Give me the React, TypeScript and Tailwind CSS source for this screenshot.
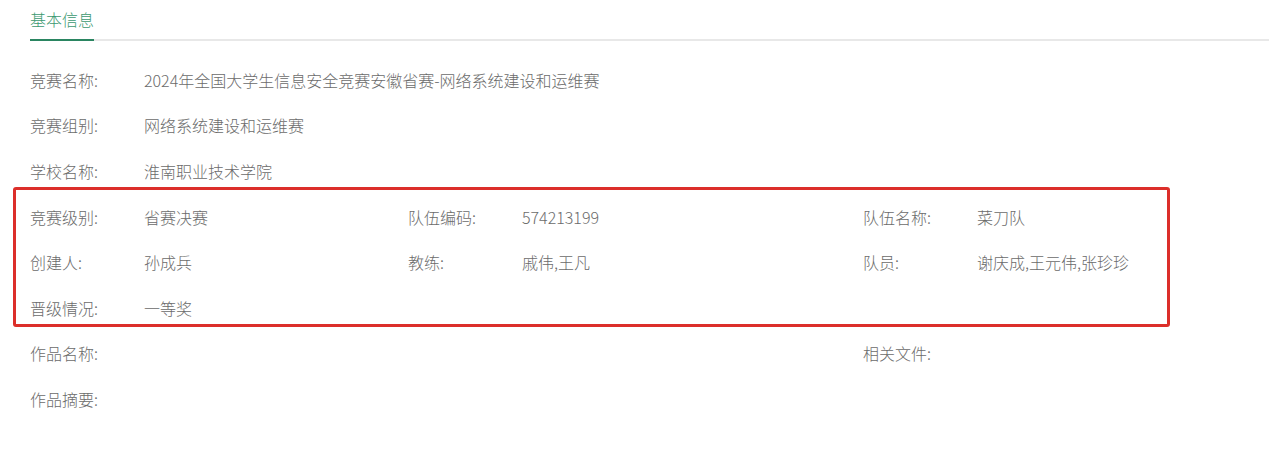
import React from "react";

const font = { fontFamily: '"Noto Sans CJK SC", "Noto Sans", sans-serif' };

type Cell = { label: string; value?: string };

function Row({ cells }: { cells: (Cell | null)[] }) {
  const widths = ["w-[378px] shrink-0", "w-[455px] shrink-0", "flex-1"];
  return (
    <div className="flex h-[45.6px] items-center">
      {cells.map((c, i) => (
        <div key={i} className={`flex whitespace-nowrap ${widths[i]}`}>
          {c && (
            <>
              <span className="w-[114px] shrink-0 text-[#6b6b6b]">{c.label}</span>
              <span className="text-[#6b6b6b]">{c.value}</span>
            </>
          )}
        </div>
      ))}
    </div>
  );
}

export default function App() {
  return (
    <div className="min-h-[475px] bg-white text-[16px] font-light leading-[22px]" style={font}>
      <div className="pl-[30px]">
        <div className="flex border-b-2 border-[#e8e8e8]">
          <div className="-mb-[2px] border-b-2 border-[#2a8561] pt-[8px] pb-[9px] text-[#3b9870]">
            基本信息
          </div>
        </div>
      </div>
      <div className="relative px-[30px] pt-[16px]">
        <Row cells={[{ label: "竞赛名称:", value: "2024年全国大学生信息安全竞赛安徽省赛-网络系统建设和运维赛" }]} />
        <Row cells={[{ label: "竞赛组别:", value: "网络系统建设和运维赛" }]} />
        <Row cells={[{ label: "学校名称:", value: "淮南职业技术学院" }]} />
        <Row
          cells={[
            { label: "竞赛级别:", value: "省赛决赛" },
            { label: "队伍编码:", value: "574213199" },
            { label: "队伍名称:", value: "菜刀队" },
          ]}
        />
        <Row
          cells={[
            { label: "创建人:", value: "孙成兵" },
            { label: "教练:", value: "戚伟,王凡" },
            { label: "队员:", value: "谢庆成,王元伟,张珍珍" },
          ]}
        />
        <Row cells={[{ label: "晋级情况:", value: "一等奖" }]} />
        <Row cells={[{ label: "作品名称:" }, null, { label: "相关文件:" }]} />
        <Row cells={[{ label: "作品摘要:" }]} />
        <div className="pointer-events-none absolute left-[13px] top-[146px] h-[140px] w-[1157px] rounded-[3px] border-[3px] border-[#dc2f2a]" />
      </div>
    </div>
  );
}
